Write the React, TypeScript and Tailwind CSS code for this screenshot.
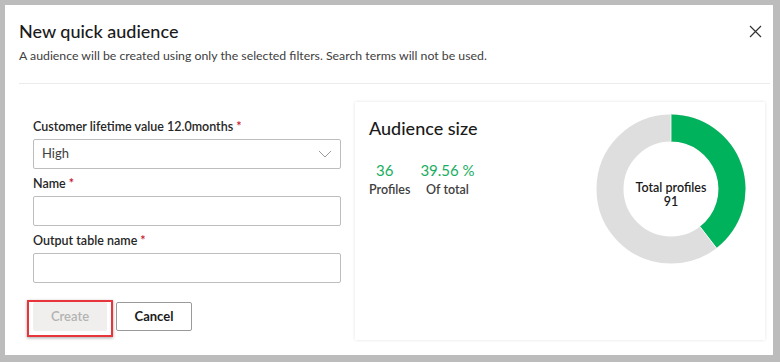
import React from "react";

function Donut() {
  const cx = 75, cy = 75, r = 61, sw = 27;
  const pct = 0.3956;
  const a = pct * 2 * Math.PI;
  const ro = r + sw / 2, ri = r - sw / 2;
  const ox = cx + ro * Math.sin(a), oy = cy - ro * Math.cos(a);
  const ix = cx + ri * Math.sin(a), iy = cy - ri * Math.cos(a);
  return (
    <svg width="150" height="150" viewBox="0 0 150 150">
      <circle cx={cx} cy={cy} r={r} fill="none" stroke="#dedede" strokeWidth={sw} />
      <path
        d={`M ${cx} ${cy - ro} A ${ro} ${ro} 0 0 1 ${ox} ${oy} L ${ix} ${iy} A ${ri} ${ri} 0 0 0 ${cx} ${cy - ri} Z`}
        fill="#00b25b"
      />
      <line x1={ox} y1={oy} x2={ix} y2={iy} stroke="#ffffff" strokeWidth="1" />
      <line x1={cx} y1={cy - ro} x2={cx} y2={cy - ri} stroke="#ffffff" strokeWidth="0.8" />
    </svg>
  );
}

export default function App() {
  return (
    <div
      className="w-[780px] h-[362px] bg-[#bcbcbc] pt-[5px] pl-[5px] pr-[7px] pb-[7px]"
      style={{ fontFamily: "Lato, 'Liberation Sans', sans-serif" }}
    >
      <div className="relative w-full h-full bg-white flex flex-col">
        <div className="px-[14px] pt-[14px]">
          <h1 className="text-[18px] leading-[24px] text-[#1a1a1a] font-medium">New quick audience</h1>
          <p className="mt-[4px] text-[12.3px] leading-[18px] text-[#404040]">
            A audience will be created using only the selected filters. Search terms will not be used.
          </p>
        </div>
        <button className="absolute right-[11px] top-[19px] w-[14px] h-[14px] flex items-center justify-center">
          <svg width="13" height="13" viewBox="0 0 13 13">
            <path d="M1 1 L12 12 M12 1 L1 12" stroke="#333" strokeWidth="1.2" fill="none" />
          </svg>
        </button>
        <div className="mx-[14px] mt-[18px] h-px bg-[#ebebeb] w-[751px]" />
        <div className="flex items-start pl-[28px] pt-[18px] gap-[14px]">
          <div className="w-[308px] pt-[17px] flex flex-col">
            <label className="text-[12.5px] leading-[16px] font-semibold text-[#262626]">
              Customer lifetime value 12.0months<span className="text-[#c8102e] ml-[3px]">*</span>
            </label>
            <div className="mt-[4px] h-[30px] border border-[#bdbdbd] rounded-[2px] flex items-center justify-between px-[8px]">
              <span className="text-[13px] text-[#404040]">High</span>
              <svg width="14" height="8" viewBox="0 0 14 8">
                <path d="M1 1 L7 7 L13 1" stroke="#9a9a9a" strokeWidth="1" fill="none" />
              </svg>
            </div>
            <label className="mt-[7px] text-[12.5px] leading-[16px] font-semibold text-[#262626]">
              Name<span className="text-[#c8102e] ml-[3px]">*</span>
            </label>
            <div className="mt-[4px] h-[30px] border border-[#bdbdbd] rounded-[2px]" />
            <label className="mt-[7px] text-[12.5px] leading-[16px] font-semibold text-[#262626]">
              Output table name<span className="text-[#c8102e] ml-[3px]">*</span>
            </label>
            <div className="mt-[4px] h-[30px] border border-[#bdbdbd] rounded-[2px]" />
            <div className="mt-[19px] flex items-start gap-[9px]">
              <div className="relative">
                <div className="absolute -left-[6px] -top-[2px] w-[86px] h-[37px] border-2 border-[#e8353b] shadow-[0_1px_3px_rgba(0,0,0,0.35)]" />
                <button className="w-[74px] h-[29px] bg-[#f0efed] rounded-[2px] text-[13px] font-semibold text-[#b3b3b3]">
                  Create
                </button>
              </div>
              <button className="w-[76px] h-[29px] border border-[#9a9a9a] rounded-[2px] bg-white text-[13px] font-bold text-[#1a1a1a]">
                Cancel
              </button>
            </div>
          </div>
          <div className="w-[410px] h-[238px] bg-white shadow-[0_0_3px_rgba(0,0,0,0.12)] flex justify-between pl-[14px] pr-[19px] pt-[15px]">
            <div>
              <div className="text-[18px] leading-[22px] text-[#1a1a1a] font-medium">Audience size</div>
              <div className="mt-[21px] flex gap-[10px]">
                <div className="flex flex-col items-center">
                  <span className="pr-[10px] text-[15px] leading-[20px] text-[#1aae62]">36</span>
                  <span className="mt-[1px] text-[12.5px] leading-[18px] font-semibold text-[#404040]">Profiles</span>
                </div>
                <div className="flex flex-col items-center">
                  <span className="text-[15px] leading-[20px] text-[#1aae62]">39.56 %</span>
                  <span className="mt-[1px] text-[12.5px] leading-[18px] font-semibold text-[#404040]">Of total</span>
                </div>
              </div>
            </div>
            <div className="relative w-[150px] h-[150px] mt-[-3px]">
              <Donut />
              <div className="absolute inset-0 pt-[12px] flex flex-col items-center justify-center text-[12.5px] leading-[14px] font-semibold text-[#1a1a1a]">
                <span>Total profiles</span>
                <span>91</span>
              </div>
            </div>
          </div>
        </div>
      </div>
    </div>
  );
}
